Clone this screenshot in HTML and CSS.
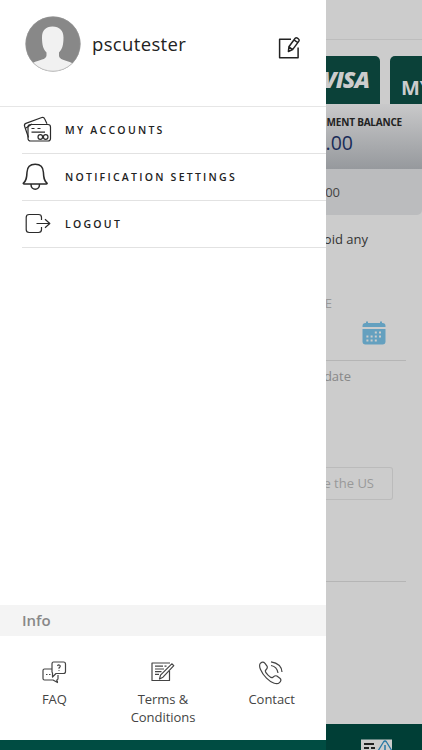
FILE: index.html
```html
<!DOCTYPE html>
<html lang="en">
<head>
<meta charset="utf-8">
<title>Account menu</title>
<link rel="stylesheet" href="styles.css">
</head>
<body>
<div class="screen">
  <aside class="drawer">
    <header class="profile">
      <svg class="avatar" viewBox="0 0 56 56"><defs><clipPath id="round"><circle cx="28" cy="28" r="27.5"/></clipPath></defs><circle cx="28" cy="28" r="27.5" fill="#888"/><path clip-path="url(#round)" fill="#f1f1f1" d="M27.500 10.500c7 0 11 4 11 11 0 8-1.500 12-4.500 15v3c0 2 1.500 3.500 4 4.300 5 1.600 9 2.700 12 5V56H5V48.500c3-2.200 7-3.300 12-4.900 2.500-.8 4.500-2.100 4.500-4.100v-3c-3-3-4.500-7-4.500-15 0-7 3.500-11 10.500-11z"/><circle cx="28" cy="28" r="27.200" fill="none" stroke="#999" stroke-width=".5"/></svg>
      <span class="username">pscutester</span>
      <svg class="edit" viewBox="0 0 24 24"><path d="M14 3.300H2.600v18.400h18.500V11.500"/><path d="M18.200 2.200q1-.9 2.200 0l1.100.8q1.200 1 .4 2.100l-6.300 8.500-4.200 1.900.5-4.700zM17 3.800l3.600 2.700M11.900 10.800l3.700 2.800"/></svg>
    </header>
    <nav class="menu">
      <a class="item"><svg class="icon" viewBox="0 0 32 32"><path d="M6.500 23.500 2.600 12.200q-.7-2 1.300-2.800L19.800 3.500q2-.7 2.800 1.200L25 9.800M4 14l6-4"/><rect x="6" y="10.500" width="22.500" height="16.500" rx="2.500"/><path d="M9.500 14.500h3M15.500 14.500h3M9.500 18.200H23"/><circle cx="18.300" cy="23" r="2.300"/><circle cx="23.700" cy="23" r="2.300"/></svg><span>MY ACCOUNTS</span></a>
      <a class="item"><svg class="icon bell" viewBox="0 0 32 32"><path d="M1.200 22.300c3.300-2.500 3.600-5.800 3.800-11C5.200 6 8.500 3.300 13.200 3.300s8 2.700 8.200 8c.2 5.200.5 8.500 3.800 11-.2.600-.5.800-1 .8H2.200c-.5 0-.8-.2-1-.8zM9 23.500c0 6.300 8.500 6.300 8.500 0"/></svg><span>NOTIFICATION SETTINGS</span></a>
      <a class="item"><svg class="icon" viewBox="0 0 32 32"><path d="M19.500 12V9.500q0-3-3-3H7.200q-3 0-3 3v12q0 3 3 3h9.300q3 0 3-3V19M14.500 15.500h13M23 11.200l4.800 4.300-4.800 4.300"/></svg><span>LOGOUT</span></a>
    </nav>
    <h2 class="info">Info</h2>
    <div class="links">
      <a class="link"><svg viewBox="0 0 26 26"><path d="M11 9H3.500Q2 9 2 10.500v8Q2 20 3.500 20H12l4.500 2.500-.8-2.500q1.300 0 1.300-1.500v-3.500M12.500 2h10q2 0 2 2v7.500q0 2-2 2H15L11.500 17v-4q-.5-.5-.5-1.500V4q0-2 1.500-2z"/><path d="M5 14.500h1.500M8 14.500h1.500M16.500 6q.5-1.200 1.700-1 1.500.5.800 1.900L18 8v.7M18 10v.8"/></svg><span>FAQ</span></a>
      <a class="link"><svg viewBox="0 0 26 26"><path d="M20 3H2v17.500h17.500V11"/><path d="m21.800 3.800 2 1.800L13 17.200 9.500 19l1-3.800zM5 6.200h8M14.500 6.200h2M5 9h9M5 11.600h6.500M5 14.300h4"/></svg><span>Terms &amp;<br>Conditions</span></a>
      <a class="link"><svg viewBox="0 0 26 26"><path transform="translate(-1 1)" d="M2.500 2.200c2-1.700 3-1.500 4.500.2l2 2.800c1.200 1.700-.6 3-1.600 4.300-.6.900 1 3 2.600 4.600s3.600 3 4.600 2.400c1.300-1 2.600-2.600 4.300-1.400l3 2.200c1.500 1.300 1.200 2.700-.4 4.300-2.300 2.300-7.500 1-13-4.500s-8.400-12.500-6-14.900zM13 4.500q6 1 7 7.500M13 .8Q23.500 2.500 24 11"/></svg><span>Contact</span></a>
    </div>
    <div class="drawer-base"></div>
  </aside>
  <main class="page">
    <div class="topbar"></div>
    <div class="cards"><div class="card visa">VISA</div><div class="card my">MY</div></div>
    <section class="balance"><b>MENT BALANCE</b><span>.00</span></section>
    <div class="amount"><span>00</span></div>
    <p class="notice">oid any</p>
    <section class="date"><span class="label">E</span><svg class="calendar" viewBox="0 0 24 24"><path fill="#64a0bf" d="M4 2V.500h2V2h12V.500h2V2h.500q3 0 3 3v1H.500V5q0-3 3-3zM.500 8h23v12.500q0 3-3 3h-17q-3 0-3-3z"/><path stroke="#ccc" stroke-width="2" stroke-dasharray="2 2.200" d="M12.800 11.500H20M4.400 15.600H20M4.400 19.500H15.500"/></svg></section>
    <p class="hint">date</p>
    <div class="option">e the US</div>
    <div class="rule"></div>
    <footer class="tabs"><svg viewBox="0 0 32 12"><path fill="#ccc" d="M0 1.500h31V12H0z"/><path stroke="#222" stroke-width="2" d="M3 6h10M3 10h5M10 10h4"/><path fill="#ccc" stroke="#2879a5" stroke-width="1.300" d="m17 13 5.500-9q1.500-2 3 0l5.500 9"/><path stroke="#2879a5" stroke-width="1.500" d="M24 7v5"/></svg></footer>
  </main>
</div>
</body>
</html>
```
FILE: styles.css
```css
* { box-sizing: border-box; }
body { margin: 0; font-family: "Open Sans", "Noto Sans", sans-serif; color: #222; }
svg { display: block; flex: none; fill: none; stroke-linejoin: round; }
p, h2 { margin: 0; }
.screen { display: grid; grid-template-columns: 326px 96px; height: 750px; overflow: hidden; }
.drawer { display: flex; flex-direction: column; height: 750px; background: #fff; }
.profile { display: flex; align-items: center; height: 107px; padding: 0 25px 19px; border-bottom: 1px solid #e6e6e6; }
.avatar { width: 56px; height: 56px; }
.username { margin-left: 11px; font-size: 18.500px; letter-spacing: .35px; }
.edit { width: 24px; height: 24px; margin: 8px 0 0 auto; stroke: #222; stroke-width: 1.500; }
.menu { height: 498px; padding-left: 22px; }
.item { display: flex; align-items: center; height: 47.150px; border-bottom: 1px solid #e2e2e2; font-size: 10.500px; font-weight: 600; letter-spacing: 2.250px; }
.item span { padding-bottom: 1px; }
.icon { width: 32px; height: 32px; margin-right: 11px; stroke: #2b2b2b; stroke-width: 1.200; }
.bell { stroke-width: 1.500; }
.info { height: 31px; padding-left: 22px; background: #f4f4f4; color: #888; font-size: 15px; font-weight: 600; line-height: 30px; }
.links { display: grid; grid-template-columns: repeat(3, 1fr); height: 104px; padding-top: 24px; }
.link { display: flex; flex-direction: column; align-items: center; color: #444; font-size: 13px; line-height: 18px; letter-spacing: -.05px; text-align: center; }
.link svg { width: 26px; height: 26px; margin-bottom: 4px; stroke: #444; stroke-width: 1.200; }
.drawer-base { flex: 1; background: #004c42; }
.page { display: flex; flex-direction: column; height: 750px; background: #ccc; overflow: hidden; }
.topbar { height: 40px; border-bottom: 1px solid #bdbdbd; }
.cards { display: grid; grid-template-columns: 54px 32px; gap: 10px; height: 64px; padding-top: 16px; }
.card { display: flex; align-items: center; background: #0b4139; color: #ccc; font-weight: 700; }
.visa { justify-content: flex-end; padding: 0 11px 2px 0; border-radius: 0 5px 0 0; font-size: 23px; font-weight: 800; font-style: italic; letter-spacing: -1px; }
.my { padding: 14px 0 0 11px; border-radius: 5px 0 0 0; font-size: 20px; font-weight: 700; overflow: hidden; white-space: nowrap; }
.balance { display: flex; flex-direction: column; align-items: flex-end; height: 65px; padding: 11px 20px 0 0; background: linear-gradient(#c9c9ca, #96999d); white-space: nowrap; }
.balance b { font-size: 10px; line-height: 15px; letter-spacing: -.2px; }
.balance span { margin: 0 49px 0 0; color: #192c59; font-size: 19.500px; line-height: 25px; }
.amount { display: flex; justify-content: flex-end; height: 46px; padding-right: 82px; background: #bbbcbe; border-radius: 0 0 5px 0; color: #444; font-size: 13px; line-height: 46px; }
.notice { height: 77px; padding: 14px 54px 0 0; color: #333; font-size: 13px; line-height: 20px; text-align: right; white-space: nowrap; }
.date { width: 80px; height: 69px; border-bottom: 1px solid #b5b5b5; }
.label { display: block; width: 6px; height: 29px; color: #999; font-size: 13px; line-height: 22px; direction: rtl; }
.calendar { width: 24px; height: 24px; margin-left: 36px; }
.hint { display: flex; justify-content: flex-end; height: 106px; padding: 5px 71px 0 0; color: #888; font-size: 13px; line-height: 20px; }
.option { display: flex; justify-content: flex-end; width: 67px; height: 33px; padding-right: 18px; border: 1px solid #bbb; border-left: 0; border-radius: 0 3px 3px 0; color: #999; font-size: 13px; line-height: 31px; white-space: nowrap; }
.notice { direction: rtl; padding: 14px 0 0; width: 42px; }
.rule { width: 80px; height: 82px; border-bottom: 1px solid #b5b5b5; }
.tabs { display: flex; align-items: flex-end; height: 26px; margin-top: auto; padding-left: 35px; background: #003e36; }
.tabs svg { width: 32px; height: 12px; }
```
